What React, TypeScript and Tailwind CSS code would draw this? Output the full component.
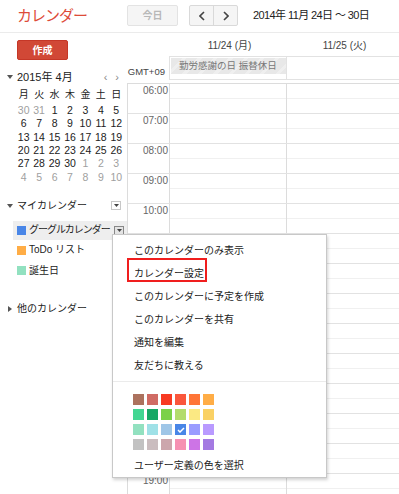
import React from "react";

const miniRows: { d: number; g: boolean }[][] = [
  [30, 31, 1, 2, 3, 4, 5].map((d, i) => ({ d, g: i < 2 })),
  [6, 7, 8, 9, 10, 11, 12].map((d) => ({ d, g: false })),
  [13, 14, 15, 16, 17, 18, 19].map((d) => ({ d, g: false })),
  [20, 21, 22, 23, 24, 25, 26].map((d) => ({ d, g: false })),
  [27, 28, 29, 30, 1, 2, 3].map((d, i) => ({ d, g: i > 3 })),
  [4, 5, 6, 7, 8, 9, 10].map((d) => ({ d, g: true })),
];

const swatches = [
  ["#ac725e", "#d06b64", "#f83a22", "#fa573c", "#ff7537", "#ffad46"],
  ["#42d692", "#16a765", "#7bd148", "#b3dc6c", "#fbe983", "#fad165"],
  ["#92e1c0", "#9fe1e7", "#9fc6e7", "#4986e7", "#9a9cff", "#b99aff"],
  ["#c2c2c2", "#cabdbf", "#cca6ac", "#f691b2", "#cd74e6", "#a47ae2"],
];

const hours = [6, 7, 8, 9, 10, 11, 12, 13, 14, 15, 16, 17, 18, 19];

const menuItems = [
  "このカレンダーのみ表示",
  "カレンダー設定",
  "このカレンダーに予定を作成",
  "このカレンダーを共有",
  "通知を編集",
  "友だちに教える",
];

function TriDown() {
  return (
    <svg width="6" height="4" viewBox="0 0 6 4" className="block">
      <path d="M0 0 L6 0 L3 4 Z" fill="#555" />
    </svg>
  );
}
function TriRight() {
  return (
    <svg width="4" height="6" viewBox="0 0 4 6" className="block">
      <path d="M0 0 L4 3 L0 6 Z" fill="#555" />
    </svg>
  );
}

function DropBox({ dark }: { dark?: boolean }) {
  return (
    <div
      className={
        dark
          ? "w-[10px] h-[9px] border border-[#888] bg-[#e4e4e4] flex items-center justify-center"
          : "w-[10px] h-[9px] border border-[#c8c8c8] bg-white flex items-center justify-center"
      }
    >
      <svg width="5" height="3" viewBox="0 0 5 3" className="block">
        <path d="M0 0 L5 0 L2.5 3 Z" fill="#444" />
      </svg>
    </div>
  );
}

export default function App() {
  return (
    <div className="relative w-[399px] h-[494px] overflow-hidden bg-white font-['Liberation_Sans','Noto_Sans_CJK_JP',sans-serif] text-[#222]">
      {/* Top header */}
      <div className="h-[33px] border-b border-[#ebebeb] flex items-center">
        <div className="w-[127px] pl-[17px] text-[15px] tracking-[-1px] text-[#dd4b39] leading-none -mt-[1px]">
          カレンダー
        </div>
        <div className="w-[51px] h-[21px] -mt-[1px] border border-[#e3e3e3] bg-[#f5f5f5] rounded-[2px] flex items-center justify-center text-[10px] font-bold text-[#b8b8b8]">
          今日
        </div>
        <div className="ml-[11px] -mt-[1px] h-[21px] w-[49px] border border-[#d9d9d9] bg-[#f5f5f5] rounded-[2px] flex">
          <div className="w-[24px] h-full border-r border-[#d9d9d9] flex items-center justify-center">
            <svg width="6" height="10" viewBox="0 0 6 10">
              <path d="M5 1 L1 5 L5 9" stroke="#444" strokeWidth="1.6" fill="none" />
            </svg>
          </div>
          <div className="flex-1 flex items-center justify-center">
            <svg width="6" height="10" viewBox="0 0 6 10">
              <path d="M1 1 L5 5 L1 9" stroke="#444" strokeWidth="1.6" fill="none" />
            </svg>
          </div>
        </div>
        <div className="ml-[15px] text-[11px] tracking-[-0.6px] text-[#222] -mt-[1px] whitespace-nowrap">
          2014年 11月 24日 ～ 30日
        </div>
      </div>

      <div className="flex">
        {/* Sidebar */}
        <div className="w-[127px] shrink-0">
          <div className="ml-[17px] mt-[7px] w-[51px] h-[20px] bg-[#d14836] border border-[#c53727] rounded-[2px] flex items-center justify-center text-white text-[10px] font-bold">
            作成
          </div>
          <div className="mt-[10px] h-[14px] flex items-center">
            <div className="w-[17px] pl-[7px]">
              <TriDown />
            </div>
            <div className="text-[11px] text-[#222] leading-none">2015年 4月</div>
            <div className="ml-auto mr-[8px] flex gap-[8px] text-[11px] text-[#888] leading-none">
              <span>‹</span>
              <span>›</span>
            </div>
          </div>
          <div className="ml-[16px] w-[108px] mt-[3px]">
            <div className="grid grid-cols-7 h-[15px] items-center text-[10px] text-[#222] text-center">
              {["月", "火", "水", "木", "金", "土", "日"].map((d) => (
                <div key={d}>{d}</div>
              ))}
            </div>
            <div className="mt-[1.3px]">
              {miniRows.map((row, ri) => (
                <div key={ri} className="grid grid-cols-7 h-[13.4px] items-center text-[10.5px] text-center leading-none">
                  {row.map((c, ci) => (
                    <div key={ci} className={c.g ? "text-[#a0a0a0]" : "text-[#222]"}>
                      {c.d}
                    </div>
                  ))}
                </div>
              ))}
            </div>
          </div>

          <div className="mt-[14px] h-[16px] flex items-center">
            <div className="w-[17px] pl-[7px]">
              <TriDown />
            </div>
            <div className="text-[10px] leading-none">マイカレンダー</div>
            <div className="ml-auto mr-[6px]">
              <DropBox />
            </div>
          </div>
          <div className="mt-[7px] ml-[13px] h-[19px] bg-[#eeeeee] flex items-center">
            <div className="ml-[4px] w-[9px] h-[9px] bg-[#4986e7] shrink-0" />
            <div className="ml-[3px] text-[10px] tracking-[-1px] leading-none whitespace-nowrap">グーグルカレンダー</div>
            <div className="ml-auto mr-[3px] shrink-0">
              <DropBox dark />
            </div>
          </div>
          <div className="ml-[13px] h-[21px] flex items-center">
            <div className="ml-[4px] w-[9px] h-[9px] bg-[#ffad46]" />
            <div className="ml-[3px] text-[10px] leading-none">ToDo リスト</div>
          </div>
          <div className="ml-[13px] h-[20px] flex items-center">
            <div className="ml-[4px] w-[9px] h-[9px] bg-[#92e1c0]" />
            <div className="ml-[3px] text-[10px] leading-none">誕生日</div>
          </div>
          <div className="mt-[20px] h-[16px] flex items-center">
            <div className="w-[17px] pl-[8px]">
              <TriRight />
            </div>
            <div className="text-[10px] leading-none">他のカレンダー</div>
          </div>
        </div>

        {/* Main calendar */}
        <div className="flex-1 min-w-0">
          <div className="grid grid-cols-[42px_117px_117px] h-[23px] items-end text-[10px] text-[#444]">
            <div />
            <div className="text-center pb-[3px] pl-[4px]">11/24 (月)</div>
            <div className="text-center pb-[3px]">11/25 (火)</div>
          </div>
          <div className="grid grid-cols-[42px_117px_117px] h-[24px]">
            <div className="flex items-end justify-end pr-[4px] pb-[1px] text-[9.5px] text-[#444]">GMT+09</div>
            <div className="border-l border-t border-b border-[#e2e2e2] pl-[1px] pt-[1px]">
              <div className="h-[16px] w-[115px] bg-[repeating-linear-gradient(135deg,#e8e8e8_0px,#e8e8e8_8px,#efefef_8px,#efefef_11px)] text-[9.5px] text-[#777] pl-[8px] flex items-center">
                勤労感謝の日 振替休日
              </div>
            </div>
            <div className="border-l border-t border-b border-[#e2e2e2]" />
          </div>
          <div className="mt-[3px] border-l border-t border-[#dcdcdc]">
            {hours.map((h) => (
              <div key={h} className="grid grid-cols-[41px_117px_117px] h-[30px] border-b border-[#e2e2e2]">
                <div className="text-right pr-[1px] pt-[1px] text-[10px] text-[#666] leading-[12px]">
                  {String(h).padStart(2, "0")}:00
                </div>
                <div className="border-l border-[#dcdcdc]">
                  <div className="h-[15px] border-b border-[#f0f0f0]" />
                </div>
                <div className="border-l border-[#dcdcdc]">
                  <div className="h-[15px] border-b border-[#f0f0f0]" />
                </div>
              </div>
            ))}
          </div>
        </div>
      </div>

      {/* Popup menu */}
      <div className="absolute left-[112px] top-[234px] w-[215px] h-[244px] bg-white border border-[#c8c8c8] shadow-[1px_2px_3px_rgba(0,0,0,0.18)]">
        <div className="pt-[4px]">
          {menuItems.map((m) => (
            <div key={m} className="h-[23px] pl-[21px] flex items-center text-[10px] text-[#222]">
              {m}
            </div>
          ))}
        </div>
        <div className="mt-[4px] border-t border-[#ebebeb]" />
        <div className="pl-[20px] pt-[12px] flex flex-col gap-[4px]">
          {swatches.map((row, ri) => (
            <div key={ri} className="flex gap-[3px]">
              {row.map((c, ci) => (
                <div key={ci} className="w-[11px] h-[11px] flex items-center justify-center" style={{ backgroundColor: c }}>
                  {ri === 2 && ci === 3 ? (
                    <svg width="8" height="6" viewBox="0 0 8 6">
                      <path d="M1 3 L3 5 L7 1" stroke="#fff" strokeWidth="1.5" fill="none" />
                    </svg>
                  ) : null}
                </div>
              ))}
            </div>
          ))}
        </div>
        <div className="pl-[21px] mt-[8px] text-[10px] text-[#222]">ユーザー定義の色を選択</div>
      </div>

      {/* Red highlight box */}
      <div className="absolute left-[127px] top-[258px] w-[80px] h-[24px] border-2 border-[#f01e1e]" />
    </div>
  );
}
